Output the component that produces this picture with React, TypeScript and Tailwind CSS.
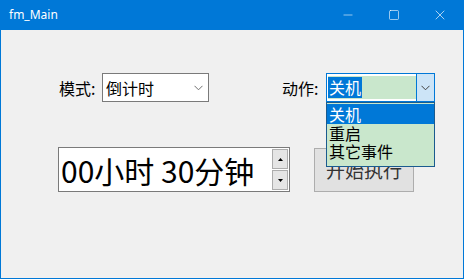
import { Minus, Square, X } from 'lucide-react'

const cjk = { fontFamily: '"Noto Sans CJK SC", "Noto Sans", sans-serif' }

function Chevron({ color }: { color: string }) {
  return (
    <svg width="9" height="6" viewBox="0 0 9 6" fill="none">
      <path d="M0.5 0.8L4.5 4.8L8.5 0.8" stroke={color} strokeWidth="1" />
    </svg>
  )
}

function Tri({ up }: { up?: boolean }) {
  return (
    <svg width="5" height="3" viewBox="0 0 5 3">
      <path d={up ? 'M0 3L2.5 0L5 3z' : 'M0 0L2.5 3L5 0z'} fill="#000" />
    </svg>
  )
}

export default function App() {
  return (
    <div className="w-[464px] h-[279px] flex flex-col border border-t-0 border-[#0078d7] bg-[#0078d7]" style={cjk}>
      {/* title bar */}
      <div className="h-[30px] flex items-center flex-none text-white">
        <span className="ml-[8px] text-[12px]" style={{ fontFamily: '"Noto Sans", sans-serif' }}>fm_Main</span>
        <div className="ml-auto flex h-full">
          <div className="w-[46px] flex items-center justify-center"><Minus size={14} strokeWidth={1} /></div>
          <div className="w-[46px] flex items-center justify-center"><Square size={12} strokeWidth={1.2} /></div>
          <div className="w-[46px] flex items-center justify-center"><X size={16} strokeWidth={1} /></div>
        </div>
      </div>

      {/* client area */}
      <div className="flex-1 bg-[#f0f0f0] relative text-black">
        <div className="flex items-center h-[29px] mt-[43px]">
          <span className="ml-[58px] w-[43px] text-[16px] leading-none">模式:</span>
          <div className="w-[107px] h-[29px] bg-white border border-[#7a7a7a] flex items-center">
            <span className="ml-[3px] text-[16px] leading-none">倒计时</span>
            <span className="ml-auto mr-[5px] flex"><Chevron color="#707070" /></span>
          </div>

          <span className="ml-[73px] w-[44px] text-[16px] leading-none">动作:</span>
          <div className="w-[109px] h-[29px] border border-[#0078d7] bg-white flex">
            <div className="flex-1 flex items-center pl-px py-[2px]">
              <div className="h-full w-[88px] bg-[#c9e7cc] flex items-center">
                <span className="bg-[#0078d7] text-white text-[16px] leading-[21px] px-px">关机</span>
              </div>
            </div>
            <div className="w-[18px] bg-[#cce4f7] border-l border-[#0078d7] flex items-center justify-center">
              <Chevron color="#404040" />
            </div>
          </div>
        </div>

        <div className="flex items-center mt-[45px]">
          <div className="ml-[57px] w-[232px] h-[45px] bg-white border border-[#7a7a7a] flex items-center">
            <span className="ml-[2px] text-[30px] leading-none">00小时 30分钟</span>
            <div className="ml-auto mr-px flex flex-col gap-px">
              <div className="w-[16px] h-[20px] bg-[#e5e5e5] border border-[#acacac] flex items-center justify-center"><Tri up /></div>
              <div className="w-[16px] h-[20px] bg-[#e5e5e5] border border-[#acacac] flex items-center justify-center"><Tri /></div>
            </div>
          </div>
          <div className="ml-[24px] w-[100px] h-[44px] bg-[#e1e1e1] border border-[#adadad] flex items-center justify-center">
            <span className="text-[19px] leading-none text-[#333]">开始执行</span>
          </div>
        </div>

        {/* open dropdown list */}
        <div className="absolute left-[325px] top-[72px] w-[109px] h-[65px] border border-[#1a5b8f] bg-[#c9e7cc] pt-px text-[16px]">
          <div className="h-[20px] bg-[#0078d7] text-white leading-[20px] pl-[2px]">关机</div>
          <div className="h-[18px] leading-[18px] pl-[2px]">重启</div>
          <div className="h-[18px] leading-[18px] pl-[2px]">其它事件</div>
        </div>
      </div>
    </div>
  )
}
